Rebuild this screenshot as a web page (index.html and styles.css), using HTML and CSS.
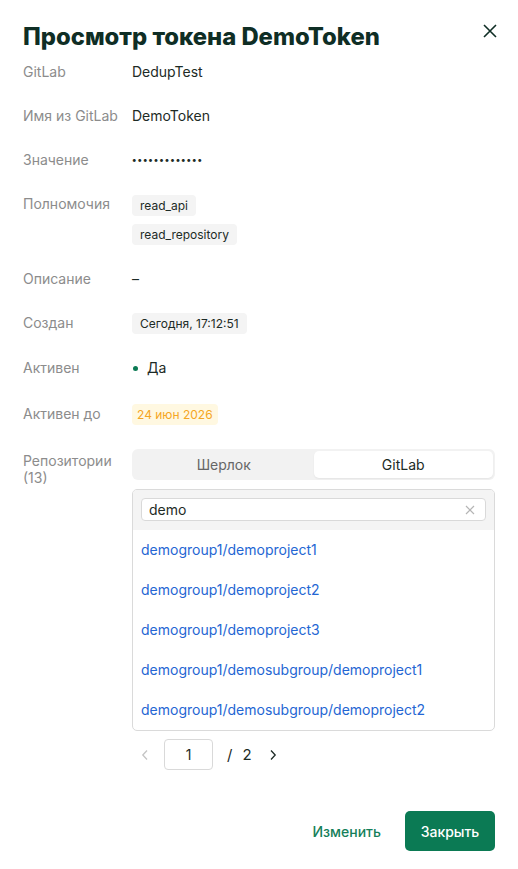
FILE: index.html
```html
<!DOCTYPE html>
<html lang="ru">
<head>
<meta charset="utf-8">
<title>Просмотр токена DemoToken</title>
<link rel="stylesheet" href="styles.css">
</head>
<body>
<div class="modal">
  <div class="head">
    <h1 class="title">Просмотр токена DemoToken</h1>
    <button class="close" aria-label="Закрыть">
      <svg width="14" height="14" viewBox="0 0 14 14"><path d="M1 1L13 13M13 1L1 13" stroke="#0f2e25" stroke-width="1.6" fill="none"/></svg>
    </button>
  </div>
  <div class="rows">
    <div class="row"><div class="label">GitLab</div><div class="value">DedupTest</div></div>
    <div class="row"><div class="label">Имя из GitLab</div><div class="value">DemoToken</div></div>
    <div class="row"><div class="label">Значение</div><div class="value dots">•••••••••••••</div></div>
    <div class="row"><div class="label">Полномочия</div>
      <div class="value tags"><span class="tag">read_api</span><span class="tag">read_repository</span></div>
    </div>
    <div class="row"><div class="label">Описание</div><div class="value">–</div></div>
    <div class="row"><div class="label">Создан</div><div class="value"><span class="tag">Сегодня, 17:12:51</span></div></div>
    <div class="row"><div class="label">Активен</div><div class="value status"><span class="dot"></span>Да</div></div>
    <div class="row until"><div class="label">Активен до</div><div class="value"><span class="tag warn">24 июн 2026</span></div></div>
    <div class="row repo">
      <div class="label multi">Репозитории<br>(13)</div>
      <div class="value repos">
        <div class="segmented">
          <div class="seg">Шерлок</div>
          <div class="seg active">GitLab</div>
        </div>
        <div class="listbox">
          <div class="search">
            <div class="input"><span>demo</span>
              <svg width="10" height="10" viewBox="0 0 10 10"><path d="M1 1L9 9M9 1L1 9" stroke="#b5b5b5" stroke-width="1.2" fill="none"/></svg>
            </div>
          </div>
          <div class="item">demogroup1/demoproject1</div>
          <div class="item">demogroup1/demoproject2</div>
          <div class="item">demogroup1/demoproject3</div>
          <div class="item">demogroup1/demosubgroup/demoproject1</div>
          <div class="item">demogroup1/demosubgroup/demoproject2</div>
        </div>
        <div class="pager">
          <span class="arrow disabled">
            <svg width="8" height="12" viewBox="0 0 8 12"><path d="M6 1.5L1.8 6L6 10.5" stroke="#c4c4c4" stroke-width="1.3" fill="none"/></svg>
          </span>
          <div class="page-input">1</div>
          <span class="slash">/</span>
          <span class="total">2</span>
          <span class="arrow">
            <svg width="8" height="12" viewBox="0 0 8 12"><path d="M2 1.5L6.2 6L2 10.5" stroke="#1d2b26" stroke-width="1.3" fill="none"/></svg>
          </span>
        </div>
      </div>
    </div>
  </div>
  <div class="footer">
    <button class="btn link">Изменить</button>
    <button class="btn primary">Закрыть</button>
  </div>
</div>
</body>
</html>
```
FILE: styles.css
```css
* { box-sizing: border-box; }
html, body { margin: 0; padding: 0; background: #fff; }
body {
  font-family: Inter, "Noto Sans", sans-serif;
  color: #1d2b26;
  font-size: 14px;
}
.modal {
  width: 518px;
  padding: 20px 23px 0 23px;
}
.head {
  display: flex;
  justify-content: space-between;
  align-items: flex-start;
}
.title {
  margin: 0;
  font-size: 23.8px;
  line-height: 34px;
  font-weight: 800;
  color: #0f2e25;
}
.close {
  border: 0;
  background: none;
  padding: 0;
  margin: 4px -2px 0 0;
  width: 14px;
  height: 14px;
  display: flex;
  cursor: pointer;
}
.rows {
  margin-top: 8px;
  display: flex;
  flex-direction: column;
  gap: 24px;
}
.row {
  display: flex;
  align-items: flex-start;
}
.label {
  width: 109px;
  flex: none;
  line-height: 20px;
  color: #8c8c8c;
  font-size: 14px;
}
.value {
  line-height: 20px;
  color: #1d2b26;
  font-size: 14px;
}
.dots { letter-spacing: 0.95px; font-size: 9.5px; font-weight: 700; }
.tags {
  display: flex;
  flex-direction: column;
  align-items: flex-start;
  gap: 8px;
  padding-top: 1px;
}
.tag {
  display: inline-block;
  background: #f4f4f4;
  border-radius: 4px;
  padding: 0 8px;
  height: 21px;
  line-height: 21px;
  font-size: 12px;
  color: #1d2b26;
}
.tag.warn {
  background: #fff8e1;
  color: #f5a623;
  font-weight: 400;
  padding: 0 5px;
}
.status { display: flex; align-items: center; }
.dot {
  width: 5px; height: 5px; border-radius: 50%;
  background: #0b7a54;
  margin: 0 9px 0 1px;
}
.row.until { margin-top: 2px; }
.label.multi { line-height: 17px; padding-top: 3px; }
.repos { flex: 1; display: flex; flex-direction: column; }
.segmented {
  display: flex;
  background: #f2f2f2;
  border-radius: 6px;
  padding: 2px;
  height: 31px;
}
.seg {
  flex: 1;
  text-align: center;
  line-height: 27px;
  color: #666;
  font-size: 14px;
  border-radius: 5px;
}
.seg.active {
  background: #fff;
  color: #1d2b26;
  box-shadow: 0 1px 2px rgba(0,0,0,0.06);
}
.listbox {
  margin-top: 9px;
  border: 1px solid #dadada;
  border-radius: 5px;
  overflow: hidden;
}
.search {
  background: #f4f4f4;
  padding: 8px 8px 8px 8px;
  height: 40px;
}
.input {
  height: 23px;
  background: #fff;
  border: 1px solid #d9d9d9;
  border-radius: 4px;
  display: flex;
  align-items: center;
  justify-content: space-between;
  padding: 0 10px 0 7px;
  font-size: 14px;
  color: #1d2b26;
}
.item {
  height: 40px;
  line-height: 40px;
  padding-left: 8px;
  color: #2466d3;
  font-size: 14px;
}
.pager {
  margin-top: 8px;
  display: flex;
  align-items: center;
  height: 31px;
}
.arrow { display: flex; width: 8px; }
.arrow.disabled { margin-left: 9px; margin-right: 15px; }
.page-input {
  width: 49px;
  height: 31px;
  border: 1px solid #d9d9d9;
  border-radius: 4px;
  text-align: center;
  line-height: 29px;
  font-size: 14px;
}
.slash { margin-left: 14px; font-size: 15px; }
.total { margin-left: 10px; font-size: 15px; }
.pager .arrow:last-child { margin-left: 17px; }
.footer {
  margin-top: 41px;
  display: flex;
  justify-content: flex-end;
  gap: 13px;
}
.btn {
  font-family: Inter, "Noto Sans", sans-serif;
  font-size: 14px;
  height: 40px;
  border-radius: 5px;
  border: 0;
  cursor: pointer;
  font-weight: 500;
}
.btn.link {
  background: none;
  color: #15805a;
  padding: 0 11px;
}
.btn.primary {
  background: #0b7a54;
  color: #fff;
  width: 90px;
}
```
